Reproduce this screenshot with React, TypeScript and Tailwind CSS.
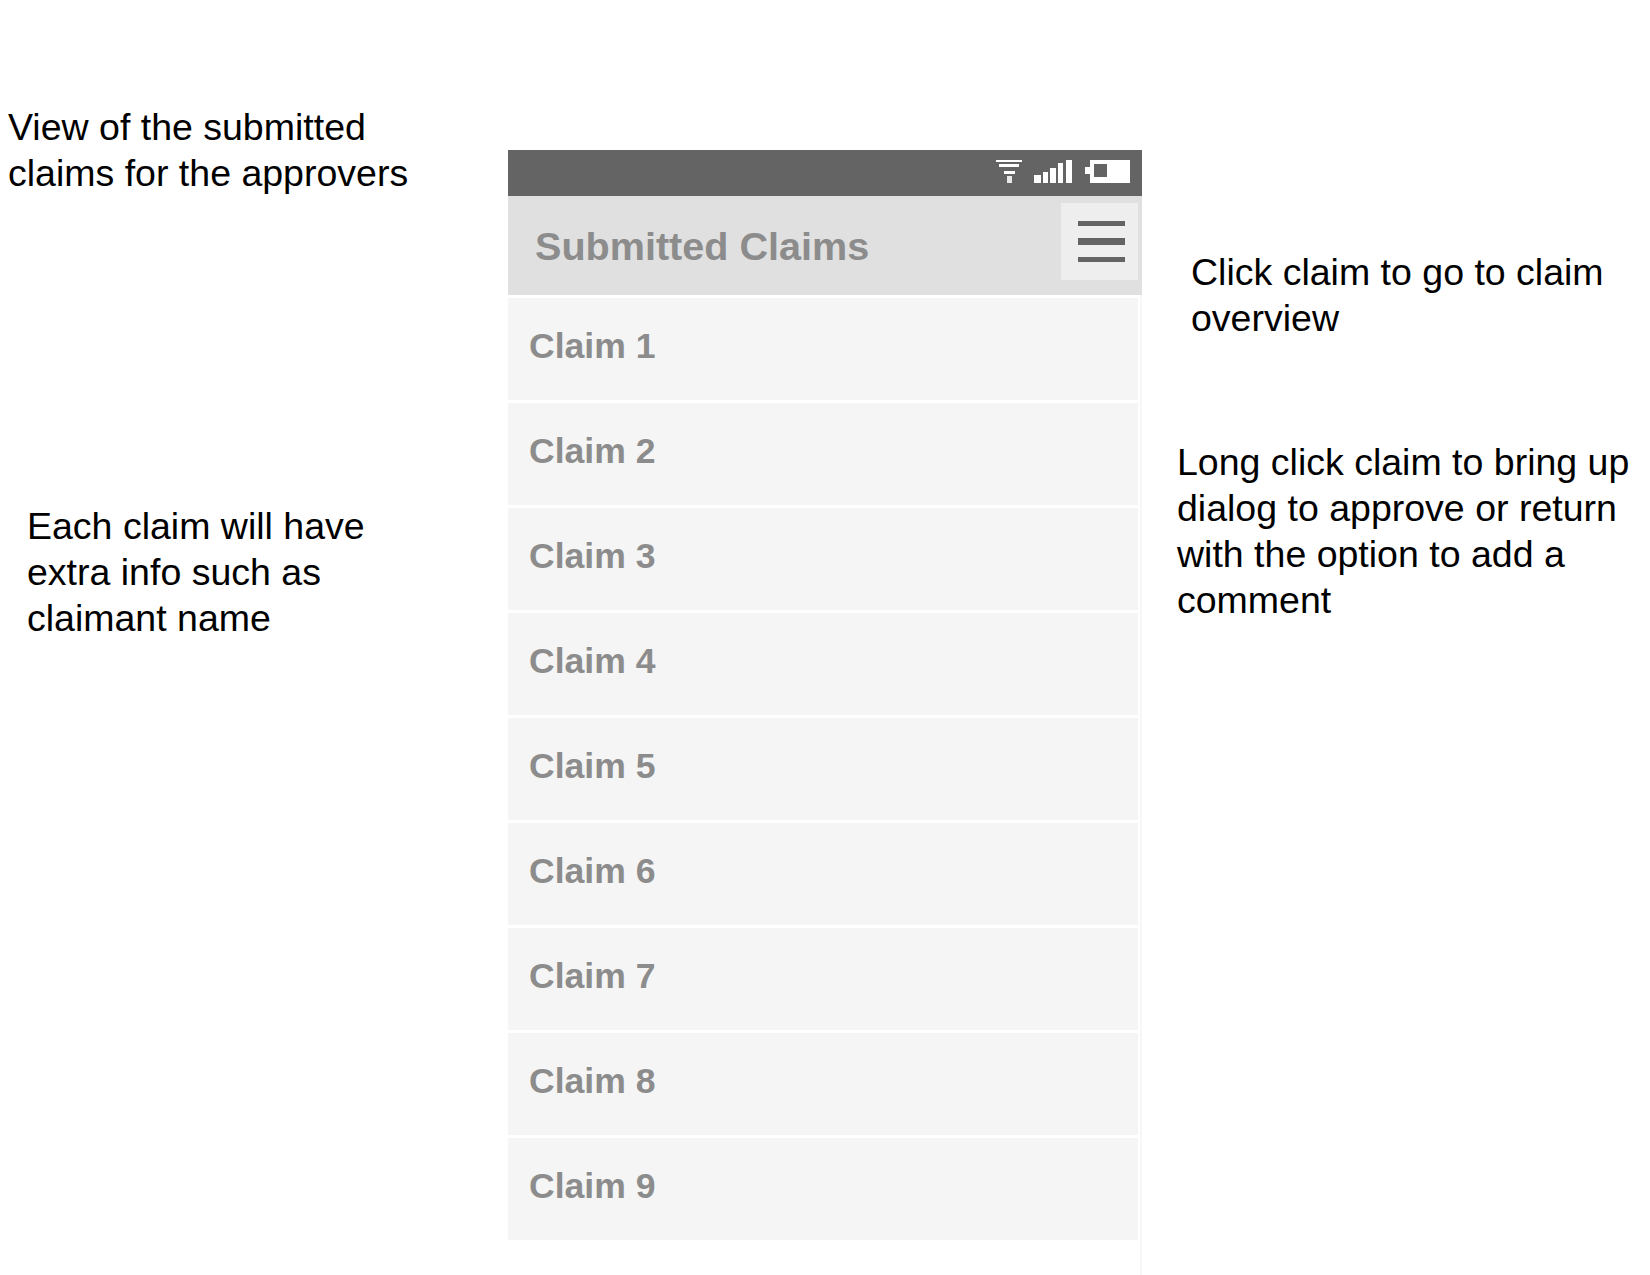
const claims = [1, 2, 3, 4, 5, 6, 7, 8, 9];

const StatusIcons = () => (
  <svg width="150" height="23" viewBox="0 0 150 23" fill="#fff">
    {/* wifi */}
    <rect x="4" y="0" width="26" height="2" />
    <rect x="7" y="4" width="20" height="3" />
    <rect x="12" y="11" width="11" height="3" />
    <rect x="15" y="16" width="5" height="7" opacity="0.85" />
    {/* signal */}
    <rect x="42" y="15" width="7" height="8" />
    <rect x="51" y="12" width="5" height="11" />
    <rect x="58" y="8" width="6" height="15" />
    <rect x="66" y="3" width="5" height="20" />
    <rect x="74" y="0" width="6" height="23" />
    {/* battery */}
    <rect x="93" y="7" width="5" height="7" />
    <rect x="98" y="0" width="40" height="23" />
    <rect x="102" y="4" width="13" height="13" fill="#646465" />
  </svg>
);

const MenuButton = () => (
  <div className="mt-[7px] flex h-[77px] w-[77px] flex-col items-start justify-center gap-[12px] self-start bg-[#eeeeee] pl-[17px]">
    <div className="h-[5px] w-[47px] bg-[#646465]" />
    <div className="h-[7px] w-[47px] bg-[#646465]" />
    <div className="h-[5px] w-[47px] bg-[#646465]" />
  </div>
);

export default function App() {
  return (
    <div className="flex h-[1275px] w-[1650px] overflow-hidden bg-white font-['Liberation_Sans',sans-serif] text-[37.5px] leading-[46px] text-black">
      {/* notes gauche */}
      <div className="w-[508px] shrink-0">
        <p className="ml-2 mt-[104px] whitespace-nowrap">
          View of the submitted
          <br />
          claims for the approvers
        </p>
        <p className="ml-[27px] mt-[307px] whitespace-nowrap">
          Each claim will have
          <br />
          extra info such as
          <br />
          claimant name
        </p>
      </div>

      {/* telephone */}
      <div className="mt-[150px] flex h-[1125px] w-[634px] shrink-0 flex-col border-r-2 border-[#f7f7f7]">
        <div className="-mr-[2px] flex h-[46px] shrink-0 items-start justify-end bg-[#646465] pl-[484px] pt-[10px]">
          <StatusIcons />
        </div>
        <div className="-mr-[2px] flex h-[99px] shrink-0 items-center justify-between bg-[#e0e0e0] pl-[27px] pr-[4px]">
          <span className="text-[39.6px] font-bold text-[#8c8c8c]">Submitted Claims</span>
          <MenuButton />
        </div>
        <div className="mt-[3px] flex flex-col gap-[3px] pr-[2px]">
          {claims.map((n) => (
            <div key={n} className="flex h-[102px] items-start bg-[#f5f5f5] pl-[21px] pt-[25px]">
              <span className="text-[35.6px] font-bold text-[#8c8c8c]">Claim {n}</span>
            </div>
          ))}
        </div>
      </div>

      {/* notes droite */}
      <div className="flex-1">
        <p className="ml-[49px] mt-[249px] whitespace-nowrap">
          Click claim to go to claim
          <br />
          overview
        </p>
        <p className="ml-[35px] mt-[98px] whitespace-nowrap">
          Long click claim to bring up
          <br />
          dialog to approve or return
          <br />
          with the option to add a
          <br />
          comment
        </p>
      </div>
    </div>
  );
}
